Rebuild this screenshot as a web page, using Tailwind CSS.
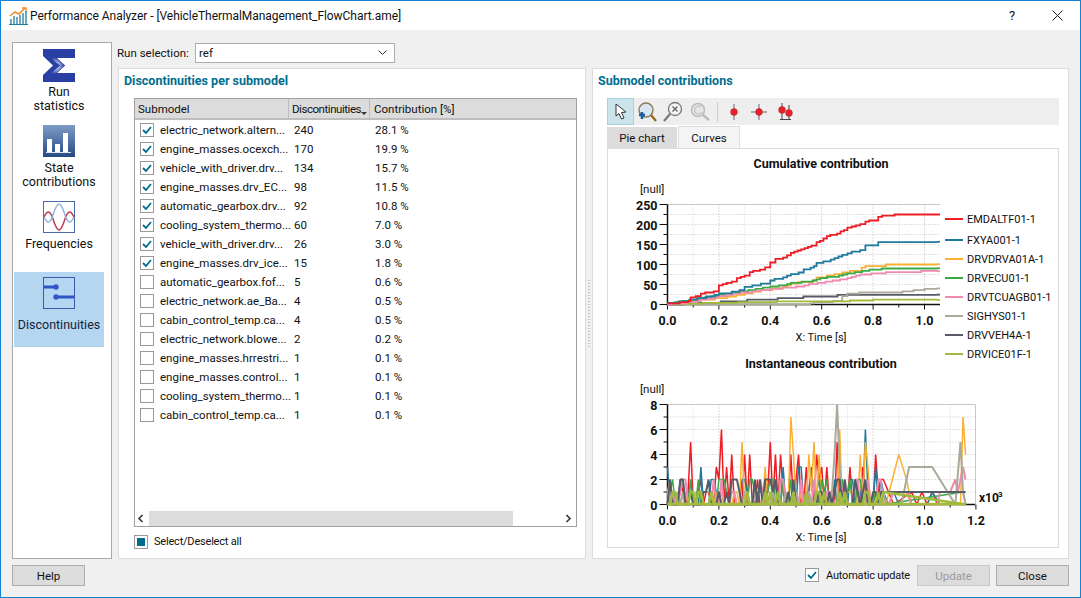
<!DOCTYPE html>
<html lang="en">
<head>
  <meta charset="UTF-8">
  <title>Performance Analyzer</title>
  <script src="https://cdn.jsdelivr.net/npm/@tailwindcss/browser@4"></script>
</head>
<body class="bg-[#f0f0f0]">
  <div class="w-[1081px] h-[598px] flex flex-col overflow-hidden border border-[#1483d4] bg-[#f0f0f0] text-[#111] text-[11.5px] leading-[14px] font-['Roboto',sans-serif]">

    <!-- Title bar -->
    <div class="h-[29px] shrink-0 bg-white flex items-center pl-[8px]">
      <svg width="19" height="18" viewBox="0 0 19 18" class="mr-[2px]">
        <path d="M1 9 L6 5 L10 7 L16 1" fill="none" stroke="#f08a24" stroke-width="1.5"/>
        <path d="M13 1 H17 V5" fill="none" stroke="#f08a24" stroke-width="1.3"/>
        <path d="M2 12V17M5 9V17M8 10V17M11 8V17M14 6V17M17 4V17" stroke="#1f7f9f" stroke-width="1.3"/>
        <path d="M0 17.5H19" stroke="#1f7f9f"/>
      </svg>
      <span class="text-[12px] tracking-[-0.05px]">Performance Analyzer - [VehicleThermalManagement_FlowChart.ame]</span>
      <span class="ml-auto w-[10px] text-[13px]">?</span>
      <svg width="11" height="11" viewBox="0 0 11 11" class="ml-[33px] mr-[17px]"><path d="M0.5 0.5L10.5 10.5M10.5 0.5L0.5 10.5" stroke="#222" stroke-width="1"/></svg>
    </div>

    <!-- Content -->
    <div class="flex gap-[5px] pt-[12px] pl-[11px] pr-[11px] h-[529px] shrink-0">
      <!-- Side nav -->
      <div class="w-[100px] h-[517px] shrink-0 bg-white border border-[#a9a9a9] px-[1px] pt-[1px] text-[12.5px]">
        <div class="w-[90px] h-[76px] flex flex-col items-center pt-[5px] text-center">
          <svg width="32" height="33" viewBox="0 0 32 33">
            <defs><radialGradient id="sg" cx="0.45" cy="0.5" r="0.5"><stop offset="0" stop-color="#e8eefa"/><stop offset="1" stop-color="#2a3fa3"/></radialGradient></defs>
            <path d="M0 0H32V9H14L22 16.5L14 24H32V33H0V26L10 16.5L0 7Z" fill="#2a3fa3"/>
            <path d="M6 8L17 16.5L6 26L13 24L22 16.5L13 9Z" fill="url(#sg)"/>
          </svg>
          <span class="mt-[3px]">Run<br>statistics</span>
        </div>
        <div class="w-[90px] h-[76px] flex flex-col items-center pt-[5px] text-center">
          <svg width="32" height="32" viewBox="0 0 32 32">
            <defs><linearGradient id="bg1" x1="0" y1="0" x2="0" y2="1"><stop offset="0" stop-color="#7d9cc4"/><stop offset="1" stop-color="#274a86"/></linearGradient></defs>
            <rect width="32" height="32" fill="url(#bg1)"/>
            <rect x="4" y="14" width="5" height="13" fill="#fff"/><rect x="12" y="19" width="5" height="8" fill="#fff"/><rect x="20" y="8" width="5" height="19" fill="#fff"/>
            <rect x="3" y="27" width="25" height="1" fill="#dfe6f0"/>
          </svg>
          <span class="mt-[4px]">State<br>contributions</span>
        </div>
        <div class="w-[90px] h-[76px] flex flex-col items-center pt-[5px] text-center">
          <svg width="32" height="32" viewBox="0 0 32 32">
            <rect x="0.5" y="0.5" width="31" height="31" fill="#fff" stroke="#4a6aa8"/>
            <path d="M1 16C4 10 6 9 9 15C11 21 13 29 16 29C19 29 21 21 23 15C26 9 28 10 31 16" fill="none" stroke="#b8404c" stroke-width="1.5"/>
            <path d="M1 16C4 22 6 23 9 17C11 11 13 3 16 3C19 3 21 11 23 17C26 23 28 22 31 16" fill="none" stroke="#8fb0dc" stroke-width="1.5"/>
          </svg>
          <span class="mt-[4px]">Frequencies</span>
        </div>
        <div class="w-[90px] h-[75px] flex flex-col items-center pt-[5px] text-center bg-[#b4d6f0] border-b border-[#a6d4e0] text-[#14233c]">
          <svg width="32" height="32" viewBox="0 0 32 32">
            <rect x="0.5" y="0.5" width="31" height="31" fill="#b4d6f0" stroke="#3a5aa8"/>
            <path d="M1 10H13" stroke="#2f55c8" stroke-width="3"/><circle cx="13" cy="10" r="2.7" fill="#2f55c8"/>
            <path d="M31 20H13" stroke="#2f55c8" stroke-width="3"/><circle cx="13" cy="20" r="2.7" fill="#2f55c8"/>
          </svg>
          <span class="mt-[9px]">Discontinuities</span>
        </div>
      </div>

      <!-- Main -->
      <div class="flex-1 flex flex-col">
        <div class="h-[26px] shrink-0 flex items-start">
          <span class="w-[78px] pt-[4px]">Run selection:</span>
          <div class="w-[200px] h-[20px] mt-[1px] bg-white border border-[#adadad] flex items-center px-[3px]">
            <span>ref</span>
            <svg width="9" height="6" viewBox="0 0 9 6" class="ml-auto mr-[4px]"><path d="M0.5 0.5L4.5 4.5L8.5 0.5" fill="none" stroke="#333"/></svg>
          </div>
        </div>
        <div class="flex h-[491px] shrink-0">
          <!-- Discontinuities -->
          <div class="w-[468px] h-[491px] ml-[1px] bg-white border border-[#dcdcdc] flex flex-col pl-[15px]">
            <div class="h-[29px] pt-[5px] -ml-[10px] text-[12.5px] font-bold text-[#006d8f]">Discontinuities per submodel</div>
            <div class="w-[443px] h-[429px] border border-[#a0a0a0] flex flex-col relative">
              <div class="h-[21px] flex bg-[#dcdcdc] border-b-2 border-[#bdbdbd] shrink-0 items-center">
                <div class="w-[154px] h-full border-r border-[#bdbdbd] pl-[3px] flex items-center">Submodel</div>
                <div class="w-[81px] h-full border-r border-[#bdbdbd] pl-[3px] flex items-center relative tracking-[-0.45px]">Discontinuities
                  <svg width="6" height="3" viewBox="0 0 6 3" class="absolute right-[2px] bottom-[3px]"><path d="M0 0H6L3 3Z" fill="#333"/></svg>
                </div>
                <div class="pl-[4px]">Contribution [%]</div>
              </div>
              <div id="rows" class="flex-1"></div>
              <div class="h-[15px] flex items-center shrink-0">
                <svg width="14" height="9" viewBox="0 0 14 9"><path d="M7.5 1L4 4.5L7.5 8" fill="none" stroke="#333" stroke-width="1.6"/></svg>
                <div class="w-[364px] h-full bg-[#dcdcdc]"></div>
                <svg width="12" height="9" viewBox="0 0 12 9" class="ml-auto mr-[2px]"><path d="M4.5 1L8 4.5L4.5 8" fill="none" stroke="#333" stroke-width="1.6"/></svg>
              </div>
            </div>
            <div class="flex items-center mt-[8px]">
              <div class="w-[14px] h-[14px] border border-[#999] bg-white flex items-center justify-center"><div class="w-[8px] h-[8px] bg-[#006d8f]"></div></div>
              <span class="ml-[6px] text-[11px] tracking-[-0.2px]">Select/Deselect all</span>
            </div>
          </div>

          <!-- Splitter -->
          <div class="w-[6px] flex items-center justify-center">
            <div class="w-[2px] h-[68px] bg-[repeating-linear-gradient(to_bottom,#c4c4c4_0,#c4c4c4_1px,transparent_1px,transparent_3px)]"></div>
          </div>

          <!-- Contributions -->
          <div class="flex-1 h-[491px] bg-white border border-[#dcdcdc] pl-[14px] flex flex-col">
            <div class="h-[29px] pt-[5px] -ml-[9px] text-[12.5px] font-bold text-[#006d8f]">Submodel contributions</div>
            <div class="w-[452px] h-[27px] bg-[#eeeeee] flex items-center shrink-0">
              <div class="w-[27px] h-[27px] bg-[#cbe3ea] border border-[#a6d2de] flex items-center justify-center">
                <svg width="14" height="17" viewBox="0 0 14 17"><path d="M2 1L2 13L5 10.5L7.5 16L10 15L7.5 9.5L12 9Z" fill="#fff" stroke="#333"/></svg>
              </div>
              <svg width="22" height="22" viewBox="0 0 22 22" class="ml-[2px]">
                <circle cx="10" cy="9" r="7" fill="#d8e6f2" stroke="#8a7a5a" stroke-width="1.4"/><path d="M15 14L20 20" stroke="#9a6a20" stroke-width="2.4"/>
                <path d="M3 14H9M6 11V18" stroke="#1f5f9f" stroke-width="2.6"/>
              </svg>
              <svg width="22" height="22" viewBox="0 0 22 22" class="ml-[4px]">
                <circle cx="13" cy="8" r="6.5" fill="#f4f4f4" stroke="#777" stroke-width="1.3"/><path d="M8 13L2 20" stroke="#777" stroke-width="2.2"/>
                <path d="M10.5 5.5L15.5 10.5M15.5 5.5L10.5 10.5" stroke="#666" stroke-width="1.4"/>
              </svg>
              <svg width="22" height="22" viewBox="0 0 22 22" class="ml-[5px]">
                <circle cx="9" cy="9" r="6.5" fill="#e6e6e6" stroke="#bcbcbc" stroke-width="1.5"/><path d="M14 14L20 19" stroke="#bcbcbc" stroke-width="2.4"/>
                <path d="M12 6A4 4 0 1 0 13 11" fill="none" stroke="#c8c8c8" stroke-width="1.5"/>
              </svg>
              <div class="w-px h-[20px] bg-[#cfcfcf] ml-[6px]"></div>
              <svg width="14" height="16" viewBox="0 0 14 16" class="ml-[9px]"><path d="M7 0V16" stroke="#666"/><circle cx="7" cy="8" r="3.4" fill="#e8202c" stroke="#b02030" stroke-width="0.5"/></svg>
              <svg width="16" height="16" viewBox="0 0 16 16" class="ml-[10px]"><path d="M8 0V16M0 8H16" stroke="#666"/><circle cx="8" cy="8" r="3.4" fill="#e8202c" stroke="#b02030" stroke-width="0.5"/></svg>
              <svg width="18" height="18" viewBox="0 0 18 18" class="ml-[10px]"><path d="M5 0V16M12 2V16M3 16.5H14" stroke="#444"/><circle cx="5" cy="7" r="3.4" fill="#e8202c" stroke="#b02030" stroke-width="0.5"/><circle cx="12" cy="10" r="3.4" fill="#e8202c" stroke="#b02030" stroke-width="0.5"/></svg>
            </div>
            <div class="flex h-[22px] items-end mt-[1px] shrink-0">
              <div class="w-[70px] h-[21px] bg-[#dcdcdc] flex items-center justify-center">Pie chart</div>
              <div class="w-[62px] h-[22px] ml-[1px] bg-[#f5f5f5] border border-b-0 border-[#dcdcdc] flex items-center justify-center">Curves</div>
            </div>
            <div class="w-[452px] h-[400px] border border-[#dcdcdc] bg-white">
              <svg id="plot" width="450" height="398" viewBox="608 149 450 398"></svg>
            </div>
          </div>
        </div>
      </div>
    </div>

    <!-- Bottom buttons -->
    <div class="flex items-start pl-[11px] pr-[11px] pt-[6px]">
      <button class="w-[73px] h-[21px] bg-[#dcdcdc] border border-[#adadad] text-center">Help</button>
      <div class="w-[14px] h-[14px] ml-auto mt-[3px] border border-[#999] bg-white flex items-center justify-center">
        <svg width="10" height="8" viewBox="0 0 10 8"><path d="M1 4L4 7L9 1" fill="none" stroke="#006d8f" stroke-width="1.8"/></svg>
      </div>
      <span class="ml-[7px] mt-[4px] w-[91px] whitespace-nowrap text-[11px] tracking-[-0.2px]">Automatic update</span>
      <button class="w-[73px] h-[21px] bg-[#dcdcdc] border border-[#c8c8c8] text-[#9a9a9a] text-center">Update</button>
      <button class="w-[73px] h-[21px] ml-[6px] bg-[#dcdcdc] border border-[#adadad] text-center">Close</button>
    </div>
  </div>

  <script>
    // Table rows
    const rows = [
      ["electric_network.altern...", 240, "28.1 %", 1],
      ["engine_masses.ocexch...", 170, "19.9 %", 1],
      ["vehicle_with_driver.drv...", 134, "15.7 %", 1],
      ["engine_masses.drv_EC...", 98, "11.5 %", 1],
      ["automatic_gearbox.drv...", 92, "10.8 %", 1],
      ["cooling_system_thermo...", 60, "7.0 %", 1],
      ["vehicle_with_driver.drv...", 26, "3.0 %", 1],
      ["engine_masses.drv_ice...", 15, "1.8 %", 1],
      ["automatic_gearbox.fof...", 5, "0.6 %", 0],
      ["electric_network.ae_Ba...", 4, "0.5 %", 0],
      ["cabin_control_temp.ca...", 4, "0.5 %", 0],
      ["electric_network.blowe...", 2, "0.2 %", 0],
      ["engine_masses.hrrestri...", 1, "0.1 %", 0],
      ["engine_masses.control...", 1, "0.1 %", 0],
      ["cooling_system_thermo...", 1, "0.1 %", 0],
      ["cabin_control_temp.ca...", 1, "0.1 %", 0],
    ];
    const tick = '<svg width="10" height="8" viewBox="0 0 10 8"><path d="M1 4L4 7L9 1" fill="none" stroke="#006d8f" stroke-width="1.8"/></svg>';
    document.getElementById('rows').innerHTML = rows.map(r => `
      <div class="h-[19px] flex items-center">
        <div class="w-[14px] h-[14px] ml-[5px] border border-[#999] bg-white flex items-center justify-center shrink-0">${r[3] ? tick : ''}</div>
        <div class="w-[140px] pl-[6px] whitespace-nowrap">${r[0]}</div>
        <div class="w-[81px]">${r[1]}</div>
        <div>${r[2]}</div>
      </div>`).join('');

    // Charts
    const C = { red: '#ee1c25', teal: '#1f7a9c', orange: '#fbb034', green: '#3aaa48', pink: '#ef8ab0', gray: '#aaa99a', dark: '#565b66', olive: '#a3bb3c' };
    let s = '';
    const txt = (x, y, t, a = 'start', b = false, fs = 11) => { s += `<text x="${x}" y="${y}" text-anchor="${a}" font-size="${fs}" ${b ? 'font-weight="700"' : ''} fill="#111">${t}</text>`; };
    const ln = (a, b, c, d, col, w = 1, dash = '') => { s += `<line x1="${a}" y1="${b}" x2="${c}" y2="${d}" stroke="${col}" stroke-width="${w}" ${dash ? `stroke-dasharray="${dash}"` : ''}/>`; };
    const X0 = 667.5, PX = 257;

    function axes(top, bottom, right, yMax, yStep, yMinor) {
      const h = bottom - top;
      for (let i = 1; i * 0.1 * PX + X0 < right - 1; i++) ln(X0 + i * 0.1 * PX, top, X0 + i * 0.1 * PX, bottom, i % 2 ? '#d4d4d4' : '#b4b4b4', 1, '1 2');
      for (let v = yMinor; v < yMax; v += yMinor) { const y = bottom - v / yMax * h; ln(X0, y, right, y, '#c4c4c4', 1, '1 2'); }
      ln(X0, top, right, top, '#c8c8c8', 1);
      for (let v = 0; v <= yMax; v += yMinor) {
        const y = bottom - v / yMax * h, major = v % yStep === 0;
        ln(major ? X0 - 8 : X0 - 4, y, X0, y, '#111');
        if (major) txt(X0 - 10, y + 5, v, 'end', true, 12.5);
      }
      for (let i = 0; i * 0.1 * PX + X0 < right + 1; i++) {
        const x = X0 + i * 0.1 * PX;
        ln(x, bottom, x, bottom + (i % 2 ? 3 : 5), '#111');
        if (i % 2 === 0) txt(x, bottom + 20, (i / 10).toFixed(1), 'middle', true, 12.5);
      }
      ln(X0, top, X0, bottom + 1, '#111', 1.5);
      ln(X0 - 1, bottom, right, bottom, '#111', 1.5);
      txt(821, bottom + 36, 'X: Time [s]', 'middle');
      txt(640, top - 12, '[null]', 'start', false, 11.5);
    }

    // Cumulative contribution: piecewise curves, sampled as small steps
    const cum = [
      [C.dark, [[0,1],[.15,4],[.25,8],[.4,13],[.5,17],[.6,21],[.8,25],[1.06,25]], 4],
      [C.gray, [[0,0],[.54,0],[.57,6],[.66,8],[.68,22],[.7,28],[.9,31],[1,38],[1.06,41]], 3],
      [C.olive, [[0,1],[.2,4],[.35,6],[.5,8],[.65,8],[.8,11],[1.06,11]], 2],
      [C.orange, [[0,2],[.1,8],[.2,16],[.25,20],[.3,27],[.38,36],[.45,42],[.48,52],[.55,57],[.58,66],[.62,70],[.68,80],[.74,84],[.77,96],[.85,98],[.9,101],[1.06,101]], 4],
      [C.green, [[0,2],[.1,12],[.2,24],[.3,34],[.4,44],[.45,48],[.48,53],[.55,58],[.58,64],[.65,70],[.7,78],[.8,87],[.85,90],[1.06,91]], 3],
      [C.pink, [[0,1],[.1,7],[.2,20],[.3,30],[.4,38],[.5,44],[.55,50],[.6,55],[.7,65],[.75,74],[.85,80],[.9,82],[1.06,83]], 3],
      [C.teal, [[0,2],[.1,12],[.15,18],[.2,26],[.25,30],[.28,35],[.3,42],[.33,48],[.38,52],[.4,60],[.45,66],[.48,74],[.51,78],[.53,87],[.57,95],[.58,104],[.62,108],[.65,115],[.68,125],[.7,128],[.75,135],[.77,146],[.8,148],[.82,155],[.9,156],[1.06,157]], 4],
      [C.red, [[0,2],[.08,8],[.09,18],[.11,20],[.13,27],[.18,33],[.2,47],[.23,55],[.25,57],[.27,65],[.3,72],[.32,82],[.36,87],[.38,92],[.4,105],[.42,113],[.45,117],[.48,128],[.52,138],[.56,147],[.58,155],[.62,170],[.66,178],[.7,192],[.75,200],[.77,208],[.8,210],[.82,218],[.85,223],[.9,224],[1.06,225]], 3],
    ];
    axes(204.5, 304.5, 940, 250, 50, 25);
    cum.forEach(([col, pts, q]) => {
      let d = '', prev = null;
      for (let k = 0; k < pts.length - 1; k++) {
        const [a, b] = pts[k], [c, e] = pts[k + 1], n = Math.max(1, Math.round((c - a) / 0.015));
        for (let j = 0; j < n; j++) {
          const t = a + (c - a) * j / n, v = Math.round((b + (e - b) * j / n) / q) * q;
          const x = X0 + t * PX, y = 304.5 - v * 0.4;
          d += prev === null ? `M${x} ${y}` : `L${x} ${prev}L${x} ${y}`;
          prev = y;
        }
      }
      d += `L${X0 + 1.06 * PX} ${304.5 - pts[pts.length - 1][1] * 0.4}`;
      s += `<path d="${d}" fill="none" stroke="${col}" stroke-width="1.8"/>`;
    });

    // Legend
    [['EMDALTF01-1', C.red, 219], ['FXYA001-1', C.teal, 240], ['DRVDRVA01A-1', C.orange, 259], ['DRVECU01-1', C.green, 278], ['DRVTCUAGB01-1', C.pink, 297], ['SIGHYS01-1', C.gray, 316], ['DRVVEH4A-1', C.dark, 335], ['DRVICE01F-1', C.olive, 354]].forEach(([n, col, y]) => {
      ln(945, y, 963, y, col, 2);
      txt(967, y + 4, n);
    });

    // Instantaneous contribution: peaks per 0.01 s
    txt(821, 167.5, 'Cumulative contribution', 'middle', true, 12.5);
    txt(821, 367.5, 'Instantaneous contribution', 'middle', true, 12.5);
    axes(404.5, 504.5, 975.5, 8, 2, 1);
    txt(979, 502, 'x10', 'start', true, 12);
    txt(998, 497, '3', 'start', true, 8);

    const noise = (seed, max, to) => {
      const o = {}; let r = seed;
      for (let i = 0; i <= to; i++) { r = (r * 137 + 59) % 1009; o[i] = r % 100 < 55 ? r % (max + 1) : 0; }
      return o;
    };
    const inst = [
      [C.red, 23, 2, 84, {9:5,13:2,19:3,21:6,23:3,25:4,30:4,32:4,40:5,42:4,44:4,48:4,51:4,54:3,58:4,60:3,62:3,66:5,71:3,73:2,76:3,81:4,84:2,86:1,88:0,95:1,97:0,99:1,101:0,103:1,105:0}, 1.5],
      [C.teal, 71, 2, 84, {0:3,5:2,13:3,45:3,51:3,52:3,56:3,77:6,81:3,86:0,88:1,90:0,101:0,103:1,106:0}, 1.5],
      [C.orange, 113, 1, 84, {1:2,29:5,38:3,48:7,49:4,55:4,57:5,59:4,67:6,75:4,77:5,78:3,85:0,90:4,93:2,95:0,114:0,115:7,116:4}, 1.5],
      [C.green, 157, 2, 84, {2:2,9:2,22:2,40:2,48:2,60:2,115:1,116:0}, 1.5],
      [C.pink, 211, 2, 84, {86:0,88:1,90:1,93:1,95:0,105:0,106:1,110:1,112:2,113:1,115:3,116:2}, 2],
      [C.gray, 307, 1, 84, {65:4,66:8,67:3,85:0,91:0,94:3,103:3,112:0,114:5,115:1,116:0}, 2],
      [C.dark, 401, 2, 84, {5:2,6:2,20:1,28:1,116:1}, 2],
      [C.olive, 503, 1, 84, {116:0}, 2.5],
    ];
    inst.forEach(([col, seed, max, to, peaks, w]) => {
      const data = Object.assign(noise(seed, max, to), peaks);
      let d = '';
      for (let i = 0; i <= 116; i++) {
        if (data[i] === undefined) continue;
        d += `${d ? 'L' : 'M'}${X0 + i / 100 * PX} ${504.5 - data[i] * 12.5}`;
      }
      s += `<path d="${d}" fill="none" stroke="${col}" stroke-width="${w}" stroke-linejoin="bevel"/>`;
    });
    ln(X0, 504, X0 + 1.16 * PX, 504, C.olive, 2.5);
    ln(975.5, 404.5, 975.5, 504.5, '#c8c8c8');
    document.getElementById('plot').innerHTML = s;
  </script>
</body>
</html>
